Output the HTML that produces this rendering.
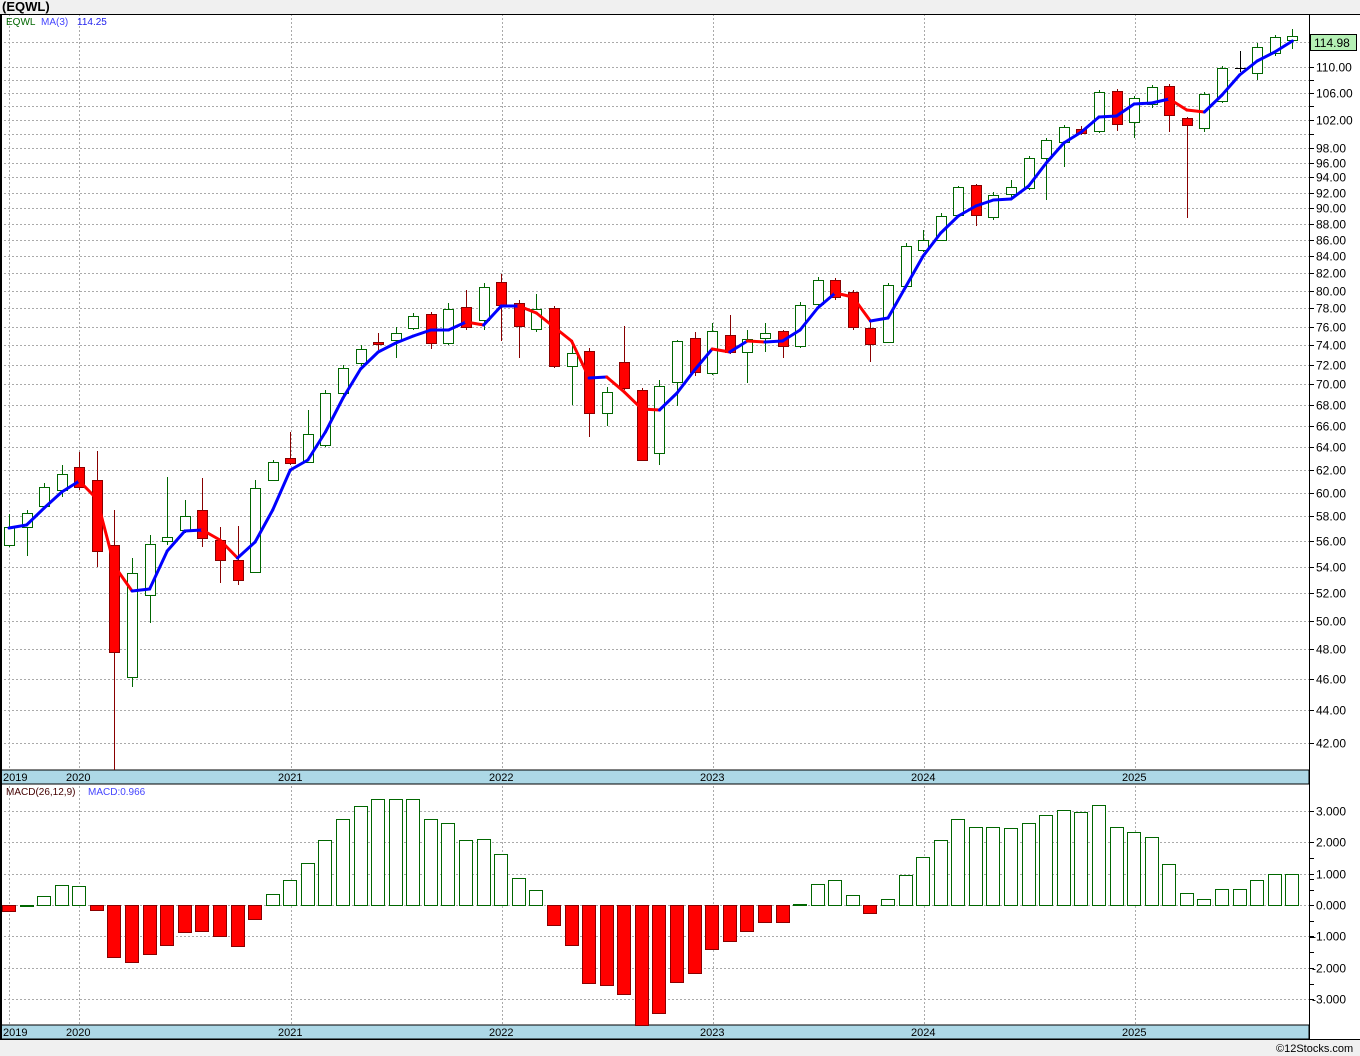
<!DOCTYPE html>
<html><head><meta charset="utf-8"><style>
body{margin:0;width:1360px;height:1056px;background:#f0f0f0;overflow:hidden;font-family:"Liberation Sans",sans-serif}
svg{position:absolute;left:0;top:0}
</style></head><body>
<svg id="s" width="1360" height="1056" xmlns="http://www.w3.org/2000/svg" font-family="Liberation Sans, sans-serif">
<rect x="0" y="14" width="1360" height="1026" fill="#fff"/>
<rect x="0" y="1040" width="1360" height="16" fill="#f0f0f0"/>
<text x="2" y="11" font-size="13" font-weight="bold" fill="#000">(EQWL)</text>
<g id="grid" stroke="#aaa" stroke-dasharray="2,2" stroke-width="1"></g>
<rect x="0" y="770" width="1309" height="14" fill="#add8e6" stroke="#000"/>
<rect x="0" y="1025" width="1309" height="14" fill="#add8e6" stroke="#000"/>
<g font-size="11" fill="#000">
<text x="3" y="781">2019</text><text x="66" y="781">2020</text><text x="278" y="781">2021</text><text x="489" y="781">2022</text><text x="700" y="781">2023</text><text x="911" y="781">2024</text><text x="1122" y="781">2025</text>
<text x="3" y="1036">2019</text><text x="66" y="1036">2020</text><text x="278" y="1036">2021</text><text x="489" y="1036">2022</text><text x="700" y="1036">2023</text><text x="911" y="1036">2024</text><text x="1122" y="1036">2025</text>
</g>
<g id="c"></g>
<line x1="1309.5" y1="14" x2="1309.5" y2="1040" stroke="#000"/>
<line x1="0" y1="14.5" x2="1360" y2="14.5" stroke="#000"/>
<line x1="0" y1="1039.5" x2="1360" y2="1039.5" stroke="#000"/>
<line x1="1" y1="14" x2="1" y2="1040" stroke="#000" stroke-width="2"/>
<g id="ax" font-size="12" fill="#000"></g>
<rect x="1310.5" y="34.5" width="46" height="16" fill="#b4f0b4" stroke="#000"/>
<text x="1314" y="47" font-size="12" fill="#000">114.98</text>
<text x="6" y="25" font-size="10" fill="#060">EQWL</text>
<text x="41" y="25" font-size="10" fill="#44f">MA(3)</text>
<text x="77" y="25" font-size="10" fill="#22e">114.25</text>
<text x="6" y="795" font-size="10" fill="#400">MACD(26,12,9)</text>
<text x="88" y="795" font-size="10" fill="#44f">MACD:0.966</text>
<text x="1276" y="1052" font-size="11" fill="#000">©12Stocks.com</text>
</svg>
<script>
var NS="http://www.w3.org/2000/svg";
function el(p,t,a){var e=document.createElementNS(NS,t);for(var k in a)e.setAttribute(k,a[k]);p.appendChild(e);return e;}
var g=document.getElementById('grid'),c=document.getElementById('c'),ax=document.getElementById('ax');
function py(p){return 3367.3-702.1*Math.log(p);}
var labs=[110,106,102,98,96,94,92,90,88,86,84,82,80,78,76,74,72,70,68,66,64,62,60,58,56,54,52,50,48,46,44,42];
labs.forEach(function(p){var y=Math.round(py(p))+.5;el(g,'line',{x1:0,y1:y,x2:1309,y2:y});el(ax,'line',{x1:1309,y1:y,x2:1314,y2:y,stroke:'#000'});var t=el(ax,'text',{x:1316,y:y+4});t.textContent=p.toFixed(2);});
[114,108,104,100].forEach(function(p){var y=Math.round(py(p))+.5;el(g,'line',{x1:0,y1:y,x2:1309,y2:y});el(ax,'line',{x1:1309,y1:y,x2:1314,y2:y,stroke:'#000'});});
[3,2,1,0,-1,-2,-3].forEach(function(v){var y=Math.round(905-31.33*v)+.5;el(g,'line',{x1:0,y1:y,x2:1309,y2:y});el(ax,'line',{x1:1309,y1:y,x2:1314,y2:y,stroke:'#000'});var t=el(ax,'text',{x:v<0?1312:1316,y:y+4});t.textContent=(v<0?'-':'')+Math.abs(v).toFixed(3);});
[879,874,890,858,937,921,968,952,984].forEach(function(y){el(ax,'line',{x1:1309,y1:y+.5,x2:1314,y2:y+.5,stroke:'#000'});});
[79,291,502,713,924,1135].forEach(function(x){el(g,'line',{x1:x+.5,y1:14,x2:x+.5,y2:1025});});
el(g,'line',{x1:9.5,y1:14,x2:9.5,y2:1025});
var C=[['w',527,545,514,547],['w',513,527,510,556],['w',487,506,483,507],['w',474,490,465,497],['r',467,487,452,490],['r',480,551,451,567],['r',545,652,510,770],['w',573,677,558,687],['w',544,595,535,623],['w',537,541,477,545],['w',516,530,500,533],['r',510,538,478,547],['r',540,560,527,583],['r',560,580,526,585],['w',488,572,480,573],['w',462,480,460,481],['r',458,463,432,465],['w',434,462,410,463],['w',393,445,390,447],['w',368,393,365,395],['w',349,363,345,366],['r',342,344,333,350],['w',333,340,327,358],['w',316,328,313,330],['r',314,343,312,349],['w',309,343,303,345],['r',307,327,290,330],['w',287,320,283,330],['r',282,305,274,341],['r',303,326,300,358],['w',309,329,294,332],['r',308,366,306,368],['w',353,366,340,405],['r',351,413,348,437],['w',392,413,387,426],['r',362,388,326,390],['r',390,460,388,461],['w',386,453,380,465],['w',341,382,340,406],['r',338,372,332,376],['w',331,373,323,375],['r',335,352,315,354],['w',339,352,330,383],['w',333,338,323,352],['r',331,346,330,358],['w',305,346,302,348],['w',280,304,277,306],['r',280,297,278,300],['r',292,327,290,330],['r',328,344,320,362],['w',285,342,283,343],['w',246,286,243,288],['w',240,250,230,252],['w',216,240,213,241],['w',187,215,186,216],['r',185,215,184,226],['w',195,217,192,220],['w',187,194,180,200],['w',158,188,156,190],['w',140,158,138,200],['w',127,142,125,167],['r',129,133,126,135],['w',92,131,90,133],['r',91,124,89,131],['w',98,122,96,138],['w',87,104,85,108],['r',86,115,84,132],['r',118,125,117,218],['w',94,128,92,132],['w',68,101,66,103],['k',68,68,51,72],['w',47,73,43,80],['w',37,53,35,56],['w',36,40,29,49]];
var MA=[528,525,508,492,481,499,566,591,589,551,531,530,540,558,542,510,470,460,432,398,369,352,343,336,330,330,322,325,306,306,313,327,341,378,377,392,409,410,393,370,349,352,341,342,341,330,308,293,297,321,318,287,256,233,216,206,200,199,186,163,143,132,117,116,104,103,99,110,112,95,75,61,52,41];
var M=[911,906,896,885,886,910,957,962,954,945,932,931,936,946,919,894,880,863,840,819,806,799,799,799,819,823,840,839,854,878,890,925,945,983,985,994,1025,1013,982,973,949,941,931,922,922,904,884,880,895,913,899,875,857,840,819,827,827,828,823,815,810,812,805,827,832,837,864,893,899,889,889,880,874,874];
function X(i){return 9+17.58*i;}
M.forEach(function(v,i){var x=Math.round(X(i))-7;var red=(i==0||i==5||(i>=6&&i<=14)||(i>=31&&i<=44)||i==49);var t=Math.min(v,905),b=Math.max(v,905);if(b-t<1){b=t+1;}
el(c,'rect',{x:x+.5,y:t+.5,width:13,height:b-t,fill:red?'#f00':'#fff',stroke:red?'#800':'#060'});});
C.forEach(function(d,i){var x=Math.round(X(i));var col=d[0]=='r'?'#800':(d[0]=='k'?'#000':'#060');
el(c,'line',{x1:x+.5,y1:d[3],x2:x+.5,y2:d[4],stroke:col});
if(d[0]=='k'){el(c,'line',{x1:x-5,y1:d[1]+.5,x2:x+6,y2:d[1]+.5,stroke:'#000'});return;}
el(c,'rect',{x:x-4.5,y:d[1]+.5,width:10,height:Math.max(1,d[2]-d[1]),fill:d[0]=='r'?'#f00':'#fff',stroke:col});});
for(var i=1;i<MA.length;i++){el(c,'line',{x1:X(i-1),y1:MA[i-1],x2:X(i),y2:MA[i],stroke:MA[i]>MA[i-1]?'#f00':'#00f','stroke-width':3,'stroke-linecap':'round'});}
</script>
</body></html>
